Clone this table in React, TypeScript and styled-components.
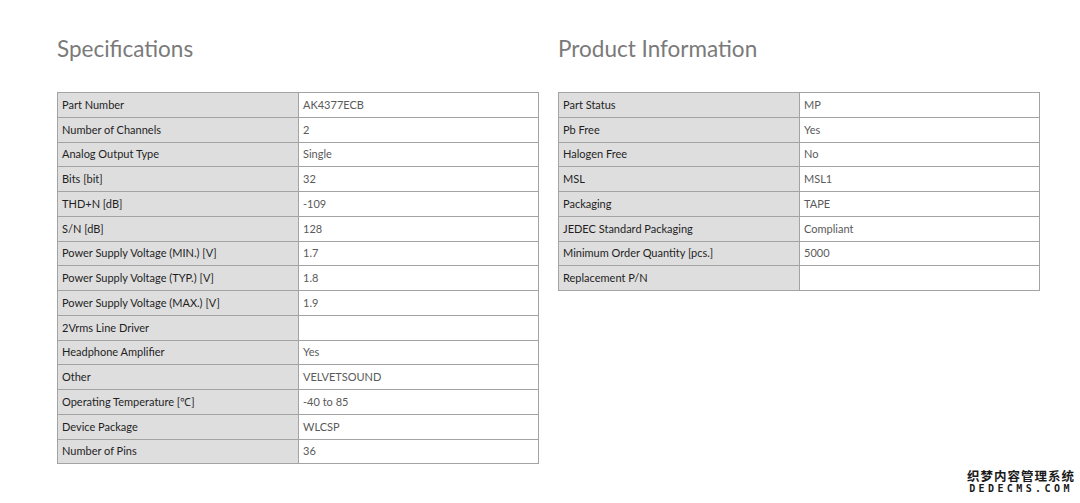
import React from "react";
import styled, { createGlobalStyle } from "styled-components";

const GlobalStyle = createGlobalStyle`
  html, body { margin: 0; padding: 0; background: #ffffff; }
  body { font-family: Lato, "Open Sans", "Liberation Sans", sans-serif; }
`;

const Page = styled.div`
  position: relative;
  width: 1080px;
  height: 503px;
  box-sizing: border-box;
  padding: 34px 0 0 57px;
  display: grid;
  grid-template-columns: 481px 481px;
  column-gap: 20px;
  align-items: start;
`;

const Section = styled.section`
  display: flex;
  flex-direction: column;
`;

const Title = styled.h2`
  margin: 0 0 28px 0;
  font-family: Lato, "Open Sans", sans-serif;
  font-weight: 400;
  font-size: 22.5px;
  line-height: 30px;
  color: #7a7a7a;
`;

const Table = styled.table`
  width: 481px;
  border-collapse: collapse;
  table-layout: fixed;
  border: 1px solid #a3a3a3;
`;

const Row = styled.tr`
  height: 24.75px;
`;

const Cell = styled.td<{ $label?: boolean }>`
  border: 1px solid #a3a3a3;
  padding: 0 0 0 4px;
  font-size: 11px;
  line-height: 14px;
  vertical-align: middle;
  background: ${(p) => (p.$label ? "#dedede" : "#ffffff")};
  color: ${(p) => (p.$label ? "#1f1f1f" : "#5a5a5a")};
  white-space: nowrap;
`;

const Watermark = styled.div`
  position: absolute;
  right: 5px;
  bottom: 8px;
  display: flex;
  flex-direction: column;
  align-items: center;
  font-weight: 700;
  color: #1a1a1a;
`;

const WmTop = styled.span`
  font-family: "Noto Sans CJK SC", sans-serif;
  font-size: 12.5px;
  line-height: 15px;
  letter-spacing: 1px;
`;

const WmBottom = styled.span`
  font-family: "DejaVu Sans Mono", monospace;
  font-size: 10px;
  line-height: 12px;
  letter-spacing: 3.4px;
`;

const specs: [string, string][] = [
  ["Part Number", "AK4377ECB"],
  ["Number of Channels", "2"],
  ["Analog Output Type", "Single"],
  ["Bits [bit]", "32"],
  ["THD+N [dB]", "-109"],
  ["S/N [dB]", "128"],
  ["Power Supply Voltage (MIN.) [V]", "1.7"],
  ["Power Supply Voltage (TYP.) [V]", "1.8"],
  ["Power Supply Voltage (MAX.) [V]", "1.9"],
  ["2Vrms Line Driver", ""],
  ["Headphone Amplifier", "Yes"],
  ["Other", "VELVETSOUND"],
  ["Operating Temperature [℃]", "-40 to 85"],
  ["Device Package", "WLCSP"],
  ["Number of Pins", "36"],
];

const info: [string, string][] = [
  ["Part Status", "MP"],
  ["Pb Free", "Yes"],
  ["Halogen Free", "No"],
  ["MSL", "MSL1"],
  ["Packaging", "TAPE"],
  ["JEDEC Standard Packaging", "Compliant"],
  ["Minimum Order Quantity [pcs.]", "5000"],
  ["Replacement P/N", ""],
];

const DataTable = ({ rows }: { rows: [string, string][] }) => (
  <Table>
    <colgroup>
      <col style={{ width: "241px" }} />
      <col style={{ width: "240px" }} />
    </colgroup>
    <tbody>
      {rows.map(([k, v]) => (
        <Row key={k}>
          <Cell $label>{k}</Cell>
          <Cell>{v}</Cell>
        </Row>
      ))}
    </tbody>
  </Table>
);

export default function App() {
  return (
    <>
      <GlobalStyle />
      <Page>
        <Section>
          <Title>Specifications</Title>
          <DataTable rows={specs} />
        </Section>
        <Section>
          <Title>Product Information</Title>
          <DataTable rows={info} />
        </Section>
        <Watermark>
          <WmTop>织梦内容管理系统</WmTop>
          <WmBottom>DEDECMS.COM</WmBottom>
        </Watermark>
      </Page>
    </>
  );
}
